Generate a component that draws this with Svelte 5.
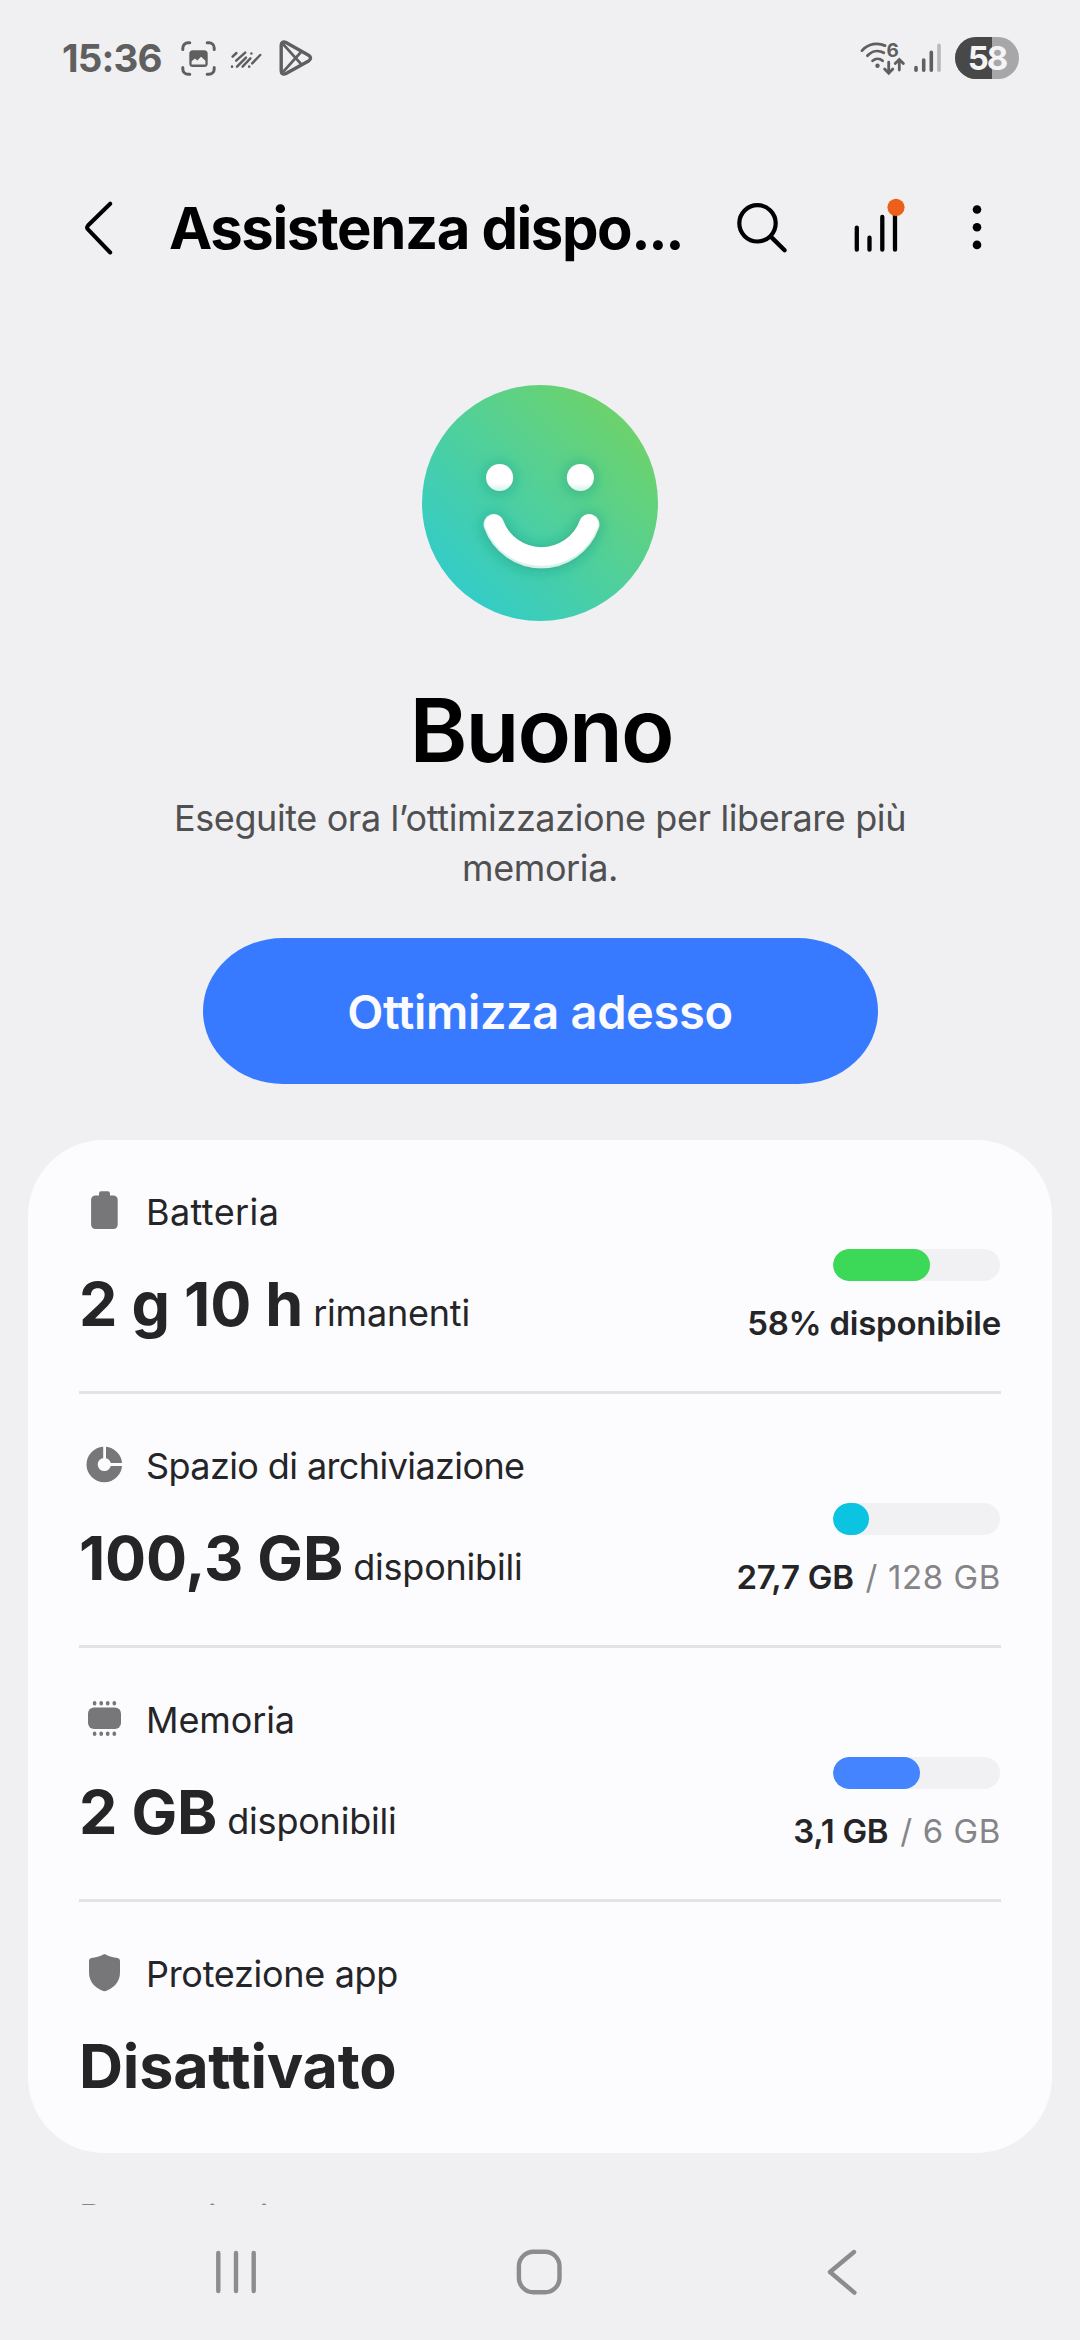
<script>
  const title = 'Assistenza dispo';
  const battery = 58;

  const rows = [
    {
      icon: 'battery',
      label: 'Batteria',
      tracking: 0.4,
      value: '2 g 10 h',
      unit: 'rimanenti',
      percent: 58,
      color: '#3cd858',
      used: '58% disponibile'
    },
    {
      icon: 'storage',
      label: 'Spazio di archiviazione',
      tracking: -0.6,
      value: '100,3 GB',
      unit: 'disponibili',
      percent: 21.6,
      color: '#0ac4e2',
      used: '27,7 GB',
      total: '128 GB'
    },
    {
      icon: 'memory',
      label: 'Memoria',
      tracking: -0.1,
      value: '2 GB',
      unit: 'disponibili',
      percent: 52,
      color: '#4485ff',
      used: '3,1 GB',
      total: '6 GB'
    },
    {
      icon: 'shield',
      label: 'Protezione app',
      tracking: -0.3,
      value: 'Disattivato'
    }
  ];
</script>

<div class="screen">
  <div class="status">
    <span class="time">15:36</span>
    <svg class="capture" width="35" height="35" viewBox="0 0 35 35">
      <g fill="none" stroke="#5f5f5f" stroke-width="3" stroke-linecap="round">
        <path d="M1.8 8.5V7A5.2 5.2 0 0 1 7 1.8h1.8" />
        <path d="M26.2 1.8H28A5.2 5.2 0 0 1 33.2 7v1.5" />
        <path d="M33.2 26.5V28a5.2 5.2 0 0 1-5.2 5.2h-1.8" />
        <path d="M8.8 33.2H7A5.2 5.2 0 0 1 1.8 28v-1.5" />
      </g>
      <rect x="8.3" y="9.2" width="18.4" height="16.8" rx="3.5" fill="#5f5f5f" />
      <path d="M10.6 23.4v-3.2l3.3-2.7 2.4 2 3.8-3.7 4.3 4v3.6z" fill="#f0f0f3" />
    </svg>
    <svg class="dashes" width="32" height="20" viewBox="0 0 32 20">
      <g stroke="#5f5f5f" stroke-width="2.5" stroke-linecap="round">
        <path d="M2.6 6.6 6.4 3" />
        <path d="M6.2 10.6 15.2 2.6" />
        <path d="M2 16.6v.1" />
        <path d="M7 16.6 16 7.6" />
        <path d="M21.4 3.4v.1" />
        <path d="M12.6 16.6 20.4 8.4" />
        <path d="M19.2 16.6v.1" />
        <path d="M22.2 13.4 30.2 5" />
      </g>
    </svg>
    <svg class="play" width="34" height="36" viewBox="0 0 34 36">
      <g fill="none" stroke="#5f5f5f" stroke-width="3.4" stroke-linejoin="round" stroke-linecap="round">
        <path d="M2.2 5.2C2.2 2.4 4.4 1.2 7 2.6L29.6 15.2c2.6 1.6 2.6 4.2 0 5.8L7 33.5c-2.6 1.4-4.8.2-4.8-2.6z" />
        <path d="M3.4 3.4 22.4 24.4" stroke-width="2.8" />
        <path d="M3.4 32.6 22.4 11.6" stroke-width="2.8" />
      </g>
    </svg>
    <span class="spacer"></span>
    <svg class="wifi" width="46" height="40" viewBox="0 0 46 40">
      <g fill="none" stroke="#5f5f5f" stroke-width="2.8" stroke-linecap="round">
        <path d="M2 12.6C8.5 5.6 17.5 4.2 25 7.6" />
        <path d="M7.4 17.8C12.2 12.6 18.6 12 23.8 14.8" />
        <path d="M12.6 22.8c3-2.6 7-2.6 10 0" />
        <path d="M28.7 24.2v10.6M24.6 31l4.1 4.2 4.1-4.2" />
        <path d="M39.3 32V21.8M35.2 25.6l4.1-4.2 4.1 4.2" />
      </g>
      <circle cx="17.5" cy="27.8" r="2.2" fill="#5f5f5f" />
      <text x="26.6" y="18.7" font-size="19" font-weight="700" fill="#5f5f5f">6</text>
    </svg>
    <svg class="signal" width="28" height="30" viewBox="0 0 28 30">
      <g stroke="#5f5f5f" stroke-width="3.6" stroke-linecap="round">
        <path d="M2 24.6v2.6M9.7 17v10.2M17.3 9.4v17.8" />
        <path d="M25 2.4v24.8" stroke="#b9b9bb" />
      </g>
    </svg>
    <span class="pill">
      <span class="charge" style="width: {battery}%"></span>
      <span class="level">{battery}</span>
    </span>
  </div>

  <header>
    <svg class="back" width="30" height="56" viewBox="0 0 30 56">
      <path d="M26.2 3.7 4 25.5q-1.8 2 0 4l22.2 23" fill="none" stroke="#000" stroke-width="4" stroke-linecap="round" />
    </svg>
    <h1>{title}<span>...</span></h1>
    <svg class="search" width="52" height="52" viewBox="0 0 52 52">
      <circle cx="21.5" cy="21.3" r="18.2" fill="none" stroke="#000" stroke-width="4.2" />
      <path d="M34.8 34.6 48.6 48.2" stroke="#000" stroke-width="4.4" stroke-linecap="round" />
    </svg>
    <svg class="chart" width="52" height="60" viewBox="0 0 52 60">
      <path d="M3.8 29.7v22M16.5 39.7v12M29.3 19v32.7M42 13v38.7" stroke="#000" stroke-width="4.3" stroke-linecap="round" />
      <circle cx="43" cy="9.3" r="8.6" fill="#ee6019" />
    </svg>
    <svg class="more" width="10" height="46" viewBox="0 0 10 46">
      <circle cx="5" cy="4.5" r="4.3" />
      <circle cx="5" cy="22.2" r="4.3" />
      <circle cx="5" cy="39.9" r="4.3" />
    </svg>
  </header>

  <main>
    <section class="hero">
      <svg width="236" height="236" viewBox="0 0 236 236">
        <defs>
          <linearGradient id="face" x1="0.15" y1="0.85" x2="0.85" y2="0.15">
            <stop offset="0" stop-color="#34ccc6" />
            <stop offset="0.5" stop-color="#50d09b" />
            <stop offset="1" stop-color="#6cd26c" />
          </linearGradient>
          <linearGradient id="eye" x1="0" y1="0" x2="0" y2="1">
            <stop offset="0.7" stop-color="#fff" />
            <stop offset="1" stop-color="#d5f3ea" />
          </linearGradient>
          <filter id="glow" x="-30%" y="-30%" width="160%" height="160%">
            <feDropShadow dx="0" dy="1" stdDeviation="7.5" flood-color="#1c9b84" flood-opacity="0.75" />
          </filter>
        </defs>
        <circle cx="118" cy="118" r="118" fill="url(#face)" />
        <g filter="url(#glow)">
          <circle cx="77.6" cy="92.5" r="13.5" fill="url(#eye)" />
          <circle cx="158.4" cy="92.5" r="13.5" fill="url(#eye)" />
          <path d="M71.8 139.5A50.7 50.7 0 0 0 167.2 139.5" fill="none" stroke="#d5f3ea" stroke-width="20.5" stroke-linecap="round" />
          <path d="M72 138.6A50.7 50.7 0 0 0 167 138.6" fill="none" stroke="#fff" stroke-width="18.8" stroke-linecap="round" />
        </g>
      </svg>
      <h2>Buono</h2>
      <p>Eseguite ora l’ottimizzazione per liberare più memoria.</p>
      <button type="button">Ottimizza adesso</button>
    </section>

    <section class="card">
      {#each rows as row}
        <div class="row">
          <div class="info">
            <div class="label">
              <svg width="50" height="48" viewBox="0 0 50 48" fill="#77777a">
                {#if row.icon === 'battery'}
                  <path d="M20 5.5a2.2 2.2 0 0 1 2.2-2.2h6.6A2.2 2.2 0 0 1 31 5.5v2h3.5a4.2 4.2 0 0 1 4.2 4.2v25a4.2 4.2 0 0 1-4.2 4.2H16.3a4.2 4.2 0 0 1-4.2-4.2v-25a4.2 4.2 0 0 1 4.2-4.2H20z" />
                {:else if row.icon === 'storage'}
                  <circle cx="25.3" cy="22.5" r="12.2" fill="none" stroke="#77777a" stroke-width="11.2" />
                  <path d="M25.6 3v19.5h19.5" fill="none" stroke="#fcfcff" stroke-width="2.8" />
                {:else if row.icon === 'memory'}
                  <rect x="9" y="11.5" width="33" height="21.6" rx="6" />
                  <path d="M15.6 6.7v1M22.2 6.7v1M28.7 6.7v1M35.3 6.7v1M15.6 37.3v1M22.2 37.3v1M28.7 37.3v1M35.3 37.3v1" stroke="#77777a" stroke-width="3.6" stroke-linecap="round" />
                {:else}
                  <path d="M25.5 4c4 2.4 9 3.5 13.2 4.1q2.3.4 2.3 2.7v11.7c0 9.5-6.5 15.5-13.5 18.2q-2 .9-4 0C16.5 38 10 32 10 22.5V10.8q0-2.3 2.3-2.7C16.5 7.5 21.5 6.4 25.5 4z" />
                {/if}
              </svg>
              <span style="letter-spacing: {row.tracking}px">{row.label}</span>
            </div>
            <div class="value">
              <strong>{row.value}</strong>
              {#if row.unit}<span>{row.unit}</span>{/if}
            </div>
          </div>
          {#if row.used}
            <div class="usage">
              <div class="bar">
                <div class="fill" style="width: {row.percent}%; background: {row.color}"></div>
              </div>
              <div class="amount">
                <b>{row.used}</b>{#if row.total}<span>&nbsp;/ {row.total}</span>{/if}
              </div>
            </div>
          {/if}
        </div>
      {/each}
    </section>

    <h3>Prestazioni</h3>
  </main>

  <nav>
    <svg width="60" height="60" viewBox="0 0 60 60">
      <path d="M12.3 11v38M30 11v38M47.7 11v38" />
    </svg>
    <svg width="60" height="60" viewBox="0 0 60 60">
      <rect x="9.9" y="9.7" width="40.6" height="40.6" rx="14.5" />
    </svg>
    <svg width="60" height="60" viewBox="0 0 60 60">
      <path d="M42 10 18 30 42.4 50.6" stroke-linejoin="round" />
    </svg>
  </nav>
</div>

<style>
  :global(body) {
    margin: 0;
    background: #f0f0f3;
  }

  .screen {
    display: flex;
    flex-direction: column;
    width: 1080px;
    height: 2340px;
    overflow: hidden;
    background: #f0f0f3;
    color: #252528;
    font-family: Inter, 'Liberation Sans', sans-serif;
  }

  svg {
    display: block;
    flex: none;
  }

  /* status bar */
  .status {
    display: flex;
    flex: none;
    align-items: center;
    height: 116px;
    padding: 0 61px 0 62px;
    color: #5f5f5f;
  }

  .time {
    width: 119px;
    font-size: 38.5px;
    font-weight: 700;
    letter-spacing: -0.85px;
  }

  .dashes {
    margin: 3px 17px 0 14px;
  }

  .spacer {
    flex: 1;
  }

  .signal {
    margin: 0 13px 0 8px;
  }

  .pill {
    position: relative;
    width: 64px;
    height: 42px;
    border-radius: 21px;
    overflow: hidden;
    background: #a7a7a9;
  }

  .charge {
    display: block;
    height: 100%;
    background: #484848;
  }

  .level {
    position: absolute;
    inset: 0;
    color: #f4f4f6;
    font-size: 33px;
    font-weight: 700;
    line-height: 43px;
    letter-spacing: -2px;
    text-align: center;
  }

  /* title bar */
  header {
    display: flex;
    flex: none;
    align-items: center;
    height: 224px;
    padding: 0 98px 0 84px;
  }

  h1 {
    flex: 1;
    margin: 0 0 0 55px;
    color: #000;
    font-size: 58px;
    font-weight: 700;
    line-height: 80px;
    letter-spacing: -1.4px;
    white-space: nowrap;
  }

  h1 span {
    letter-spacing: -2.4px;
  }

  .search {
    margin-right: 65px;
  }

  .chart {
    margin-right: 67px;
  }

  main {
    flex: 1;
    min-height: 0;
    overflow: hidden;
  }

  /* overall state */
  .hero {
    display: flex;
    flex-direction: column;
    align-items: center;
    padding-top: 45px;
  }

  h2 {
    margin: 57px 0 11px;
    padding-left: 2px;
    color: #000;
    font-size: 88px;
    font-weight: 600;
    line-height: 104px;
    letter-spacing: -1.95px;
  }

  .hero p {
    width: 780px;
    margin: 0;
    color: #505052;
    font-size: 36px;
    line-height: 50px;
    letter-spacing: -0.4px;
    text-align: center;
  }

  button {
    width: 675px;
    height: 146px;
    margin: 45px 0 56px;
    padding: 0;
    border: none;
    border-radius: 80px / 73px;
    background: #387aff;
    color: #fafaff;
    font-family: inherit;
    font-size: 47px;
    font-weight: 600;
    letter-spacing: -0.35px;
  }

  /* device details */
  .card {
    margin: 0 28px;
    padding: 0 51px;
    border-radius: 76px;
    background: #fcfcff;
  }

  .row {
    display: flex;
    justify-content: space-between;
    height: 251px;
  }

  .row + .row {
    border-top: 3px solid #e3e3e5;
  }

  .info {
    padding-top: 48px;
  }

  .label {
    display: flex;
    align-items: center;
    gap: 17px;
    font-size: 36px;
    line-height: 48px;
  }

  .value {
    display: flex;
    align-items: baseline;
    gap: 10px;
    margin-top: 28px;
    font-size: 36px;
    line-height: 80px;
    letter-spacing: -0.2px;
  }

  .value strong {
    font-size: 61px;
    font-weight: 700;
  }

  .usage {
    display: flex;
    flex-direction: column;
    align-items: flex-end;
    padding-top: 109px;
  }

  .bar {
    width: 167px;
    height: 32px;
    margin-right: 1px;
    border-radius: 16px;
    overflow: hidden;
    background: #f1f1f3;
  }

  .fill {
    height: 100%;
    border-radius: 16px;
  }

  .amount {
    margin-top: 22px;
    font-size: 33px;
    line-height: 40px;
    letter-spacing: -0.25px;
  }

  .amount b {
    font-weight: 600;
  }

  .amount span {
    margin-left: 2px;
    color: #858587;
    letter-spacing: 0.6px;
  }

  h3 {
    margin: 43px 79px 0;
    color: #858587;
    font-size: 37px;
    font-weight: 400;
    line-height: 44px;
    letter-spacing: -0.4px;
  }

  /* navigation bar */
  nav {
    display: flex;
    flex: none;
    align-items: center;
    gap: 243px;
    height: 133px;
    padding: 0 0 2px 206px;
    fill: none;
    stroke: #8c8c8d;
    stroke-width: 4.4;
    stroke-linecap: round;
  }
</style>
